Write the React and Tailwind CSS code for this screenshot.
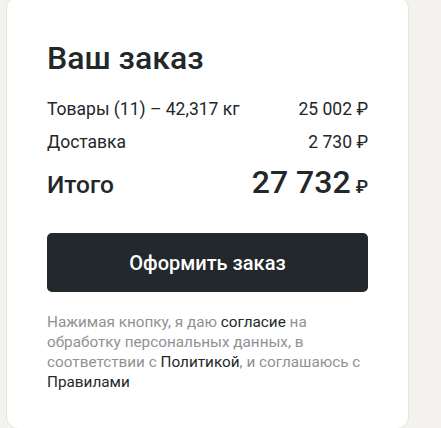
import React from 'react';

const Rub = ({ className = '' }) => <span className={className}>₽</span>;

const OrderSummary = () => {
  return (
    <div className="w-[403px] h-[433px] ml-[6px] -mt-[4px] bg-white border border-[#e6e4df] rounded-xl px-[40px] pt-[42px]">
      <h2 className="text-[32px] leading-[38px] font-medium text-[#22272a]">Ваш заказ</h2>

      <div className="mt-[21px] flex items-center justify-between text-[17.5px] leading-[22px] text-[#22272a]">
        <span>Товары (11) – 42,317 кг</span>
        <span>25 002 <Rub /></span>
      </div>
      <div className="mt-[11px] flex items-center justify-between text-[17.5px] leading-[22px] text-[#22272a]">
        <span>Доставка</span>
        <span>2 730 <Rub /></span>
      </div>
      <div className="mt-[10px] flex items-baseline justify-between text-[#22272a]">
        <span className="text-[24.5px] leading-[30px] font-medium">Итого</span>
        <span className="text-[32px] leading-[38px] font-medium">
          27 732<Rub className="ml-[5px] text-[18px]" />
        </span>
      </div>

      <button className="mt-[27px] w-full h-[59px] rounded-[5px] bg-[#22282b] text-white text-[20px] font-medium">
        Оформить заказ
      </button>

      <p className="mt-[20px] text-[15.3px] leading-[20px] text-[#8f9295]">
        Нажимая кнопку, я даю <a className="text-[#22272a]">согласие</a> на обработку персональных данных, в
        соответствии с <a className="text-[#22272a]">Политикой</a>, и соглашаюсь с{' '}
        <a className="text-[#22272a]">Правилами</a>
      </p>
    </div>
  );
};

export default function App() {
  return (
    <div className="w-[441px] h-[428px] overflow-hidden bg-[#f3f2ee]" style={{ fontFamily: 'Roboto, "Noto Sans", sans-serif' }}>
      <OrderSummary />
    </div>
  );
}
